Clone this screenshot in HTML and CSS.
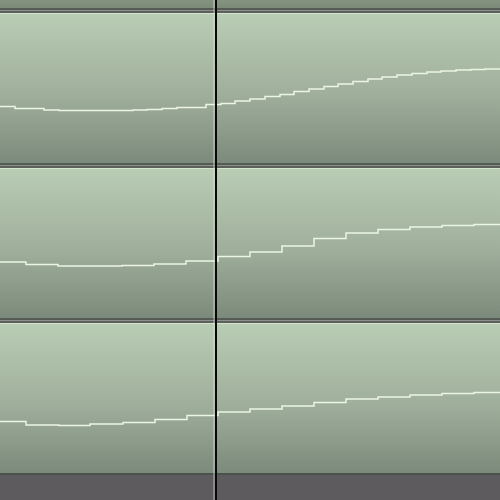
FILE: index.html
```html
<!DOCTYPE html>
<html lang="en">
<head>
<meta charset="UTF-8">
<title>Envelope lanes</title>
<link rel="stylesheet" href="styles.css">
</head>
<body>
<div class="tracks">
  <div class="lane-tail"></div>

  <div class="divider"></div>
  <div class="lane">
    <svg class="curve" viewBox="0 13 500 150" width="500" height="150">
      <path d="M0 106.5 H15 V108.5 H44 V110 H59 V110.5 H133 V110 H147 V109.5 H162 V108.5 H177 V107.5 H206 V104.5 H221 V103.5 H235 V101 H250 V99 H265 V96.5 H280 V94.5 H294 V91.5 H309 V89 H324 V86.5 H338 V84 H353 V81.5 H368 V79 H382 V77 H397 V75 H412 V73.5 H427 V72 H441 V71 H456 V70 H471 V69.5 H485 V69 H500"/>
    </svg>
  </div>

  <div class="divider"></div>
  <div class="lane">
    <svg class="curve" viewBox="0 168 500 150" width="500" height="150">
      <path d="M0 262 H26 V264.5 H58 V266 H122 V265.5 H154 V264 H186 V261 H218 V256.5 H250 V252 H282 V246 H314 V238.5 H346 V233 H378 V229.5 H410 V227 H442 V225.5 H474 V224.5 H500"/>
    </svg>
  </div>

  <div class="divider"></div>
  <div class="lane">
    <svg class="curve" viewBox="0 323 500 150" width="500" height="150">
      <path d="M0 421.5 H26 V425 H59 V425.5 H90 V424 H123 V422.5 H155 V419.5 H187 V415.5 H218 V412 H250 V409 H282 V406 H314 V402.5 H346 V399 H378 V397 H410 V395 H442 V393.5 H474 V392.5 H500"/>
    </svg>
  </div>

  <div class="lane-end"></div>

  <!-- play cursor -->
  <div class="cursor"></div>
</div>
</body>
</html>
```

FILE: styles.css
```css
html, body { margin: 0; padding: 0; }
body { background: #5d5b5d; width: 500px; height: 500px; overflow: hidden; }

.tracks { position: relative; display: flex; flex-direction: column; height: 500px; }

.lane-tail { height: 8px; background: linear-gradient(#84927f, #7c8a7b); }
.divider { height: 5px; background: linear-gradient(#555a55 0, #555a55 2px, #8d918d 2px, #8d918d 3px, #5b605b 3px, #5b605b 5px); }

.lane {
  height: 150px;
  box-sizing: border-box;
  border-top: 1px solid #d6e4cf;
  background: linear-gradient(#b9ccb4, #9fae9b 55%, #7c8a7b);
}
.curve { display: block; margin-top: -1px; }
.curve path { fill: none; stroke: #ecf5e4; stroke-width: 1.5; }

.lane-end { height: 2px; background: #4d514d; }

.cursor {
  position: absolute;
  top: 0;
  bottom: 0;
  left: 215px;
  width: 2px;
  background: #080808;
  box-shadow: -2px 0 0 rgba(220, 232, 214, 0.35);
}
```
